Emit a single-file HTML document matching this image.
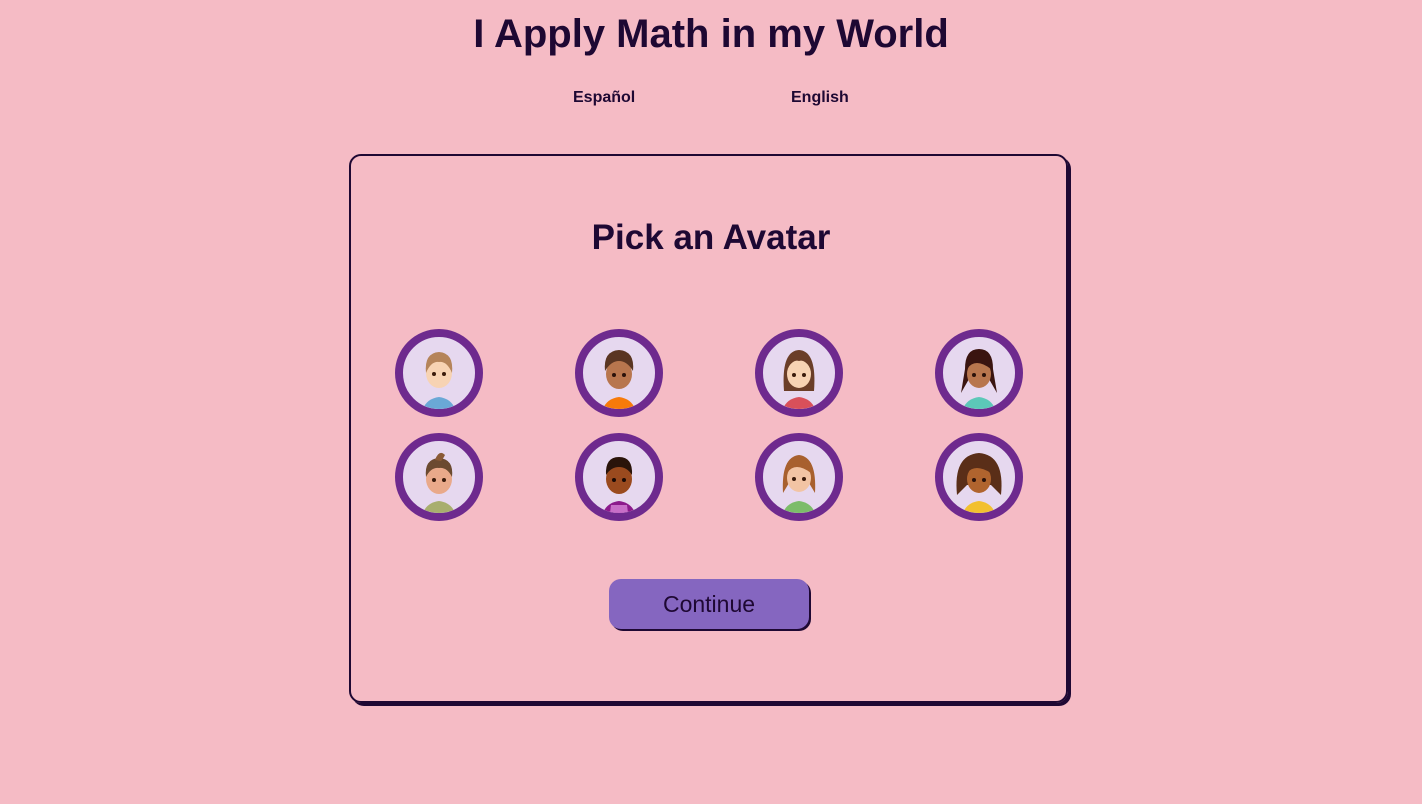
<!DOCTYPE html>
<html><head><meta charset="utf-8"><style>
body{margin:0;background:#f5bbc5;font-family:"Liberation Sans",sans-serif;color:#1e0833;width:1422px;height:804px;position:relative;overflow:hidden}
h1{position:absolute;top:12px;left:0;width:1422px;text-align:center;margin:0;font-size:40px;font-weight:bold;letter-spacing:0px}
.lang{position:absolute;top:89px;font-size:16px;font-weight:bold}
.card{position:absolute;left:349px;top:154px;width:715px;height:545px;border:2px solid #1e0833;border-radius:12px;box-shadow:3px 3px 0 #1e0833}
h2{position:absolute;top:218px;left:0;width:1422px;text-align:center;margin:0;font-size:35px;font-weight:bold}
.av{position:absolute;width:88px;height:88px}
.btn{position:absolute;left:609px;top:579px;width:200px;height:50px;background:#8566c0;border-radius:12px;box-shadow:2px 2px 0 #1e0833;text-align:center;line-height:50px;font-size:23px}
</style></head><body>
<h1>I Apply Math in my World</h1>
<div class="lang" style="left:573px">Español</div>
<div class="lang" style="left:791px">English</div>
<div class="card"></div>
<h2>Pick an Avatar</h2>
<svg width="0" height="0" style="position:absolute"><defs><clipPath id="c"><circle cx="44" cy="44" r="36"/></clipPath></defs></svg>
<!-- avatars -->
<svg class="av" style="left:395px;top:329px" viewBox="0 0 88 88"><circle cx="44" cy="44" r="40" fill="#e6d8ef" stroke="#6e2a8e" stroke-width="8"/><g clip-path="url(#c)"><path d="M26 88 Q28 70 44 68 Q60 70 62 88Z" fill="#6aa8d6"/><ellipse cx="44" cy="44" rx="13" ry="15" fill="#f7d3b3"/><path d="M31 44 Q29 24 44 23 Q59 24 57 44 Q52 32 44 33 Q36 32 31 44Z" fill="#b5845a"/><circle cx="39" cy="45" r="2" fill="#3a1b0c"/><circle cx="49" cy="45" r="2" fill="#3a1b0c"/></g></svg>
<svg class="av" style="left:575px;top:329px" viewBox="0 0 88 88"><circle cx="44" cy="44" r="40" fill="#e6d8ef" stroke="#6e2a8e" stroke-width="8"/><g clip-path="url(#c)"><path d="M26 88 Q28 70 44 68 Q60 70 62 88Z" fill="#f77a0a"/><ellipse cx="44" cy="45" rx="13" ry="15" fill="#b8764e"/><path d="M30 42 Q28 22 44 21 Q60 22 58 42 Q52 32 44 32 Q36 32 30 42Z" fill="#5a3522"/><circle cx="39" cy="46" r="2" fill="#2a120a"/><circle cx="49" cy="46" r="2" fill="#2a120a"/></g></svg>
<svg class="av" style="left:755px;top:329px" viewBox="0 0 88 88"><circle cx="44" cy="44" r="40" fill="#e6d8ef" stroke="#6e2a8e" stroke-width="8"/><g clip-path="url(#c)"><path d="M26 88 Q28 70 44 68 Q60 70 62 88Z" fill="#d9505a"/><path d="M29 62 Q26 22 44 21 Q62 22 59 62Z" fill="#6b3e28"/><ellipse cx="44" cy="45" rx="12" ry="14" fill="#f7d3b3"/><path d="M32 40 Q38 30 44 32 Q50 30 56 40 L56 30 L32 30Z" fill="#6b3e28"/><circle cx="39" cy="46" r="2" fill="#3a1b0c"/><circle cx="49" cy="46" r="2" fill="#3a1b0c"/></g></svg>
<svg class="av" style="left:935px;top:329px" viewBox="0 0 88 88"><circle cx="44" cy="44" r="40" fill="#e6d8ef" stroke="#6e2a8e" stroke-width="8"/><g clip-path="url(#c)"><path d="M26 88 Q28 70 44 68 Q60 70 62 88Z" fill="#5cc8b8"/><path d="M26 64 L30 40 Q30 20 44 20 Q58 20 58 40 L62 64 L54 50 L34 50Z" fill="#3a1410"/><ellipse cx="44" cy="45" rx="12" ry="14" fill="#b8764e"/><path d="M32 40 Q40 28 56 40 L56 30 L32 30Z" fill="#3a1410"/><circle cx="39" cy="46" r="2" fill="#2a120a"/><circle cx="49" cy="46" r="2" fill="#2a120a"/></g></svg>
<svg class="av" style="left:395px;top:433px" viewBox="0 0 88 88"><circle cx="44" cy="44" r="40" fill="#e6d8ef" stroke="#6e2a8e" stroke-width="8"/><g clip-path="url(#c)"><path d="M26 88 Q28 70 44 68 Q60 70 62 88Z" fill="#a8ae6e"/><ellipse cx="44" cy="46" rx="13" ry="15" fill="#e9a98a"/><path d="M31 44 Q29 26 44 25 Q59 26 57 44 Q52 34 44 35 Q36 34 31 44Z" fill="#6b4a30"/><path d="M40 27 Q44 16 50 22 Q48 26 46 28Z" fill="#8a5a35"/><circle cx="39" cy="47" r="2" fill="#3a1b0c"/><circle cx="49" cy="47" r="2" fill="#3a1b0c"/></g></svg>
<svg class="av" style="left:575px;top:433px" viewBox="0 0 88 88"><circle cx="44" cy="44" r="40" fill="#e6d8ef" stroke="#6e2a8e" stroke-width="8"/><g clip-path="url(#c)"><path d="M26 88 Q28 70 44 68 Q60 70 62 88Z" fill="#8c1a8c"/><path d="M34 88 L36 72 L52 72 L54 88Z" fill="#c86ec8"/><ellipse cx="44" cy="46" rx="13" ry="15" fill="#9a4a1e"/><path d="M31 42 Q30 24 44 24 Q58 24 57 42 Q52 34 44 34 Q36 34 31 42Z" fill="#2a140a"/><circle cx="39" cy="47" r="2" fill="#1a0a05"/><circle cx="49" cy="47" r="2" fill="#1a0a05"/></g></svg>
<svg class="av" style="left:755px;top:433px" viewBox="0 0 88 88"><circle cx="44" cy="44" r="40" fill="#e6d8ef" stroke="#6e2a8e" stroke-width="8"/><g clip-path="url(#c)"><path d="M26 88 Q28 70 44 68 Q60 70 62 88Z" fill="#7cbc6a"/><path d="M28 60 Q26 24 44 22 Q62 24 60 60 L54 50 L34 50Z" fill="#a8602e"/><ellipse cx="44" cy="45" rx="12" ry="14" fill="#f2c4a4"/><path d="M32 40 Q40 28 56 40 L56 30 L32 30Z" fill="#a8602e"/><circle cx="39" cy="46" r="2" fill="#3a1b0c"/><circle cx="49" cy="46" r="2" fill="#3a1b0c"/></g></svg>
<svg class="av" style="left:935px;top:433px" viewBox="0 0 88 88"><circle cx="44" cy="44" r="40" fill="#e6d8ef" stroke="#6e2a8e" stroke-width="8"/><g clip-path="url(#c)"><path d="M26 88 Q28 70 44 68 Q60 70 62 88Z" fill="#f2c030"/><path d="M22 62 Q18 22 44 20 Q70 22 66 62 L56 52 L32 52Z" fill="#5a2e18"/><ellipse cx="44" cy="46" rx="12" ry="14" fill="#b0642e"/><path d="M32 40 Q40 30 56 40 L56 30 L32 30Z" fill="#5a2e18"/><circle cx="39" cy="47" r="2" fill="#2a120a"/><circle cx="49" cy="47" r="2" fill="#2a120a"/></g></svg>
<div class="btn">Continue</div>
</body></html>
